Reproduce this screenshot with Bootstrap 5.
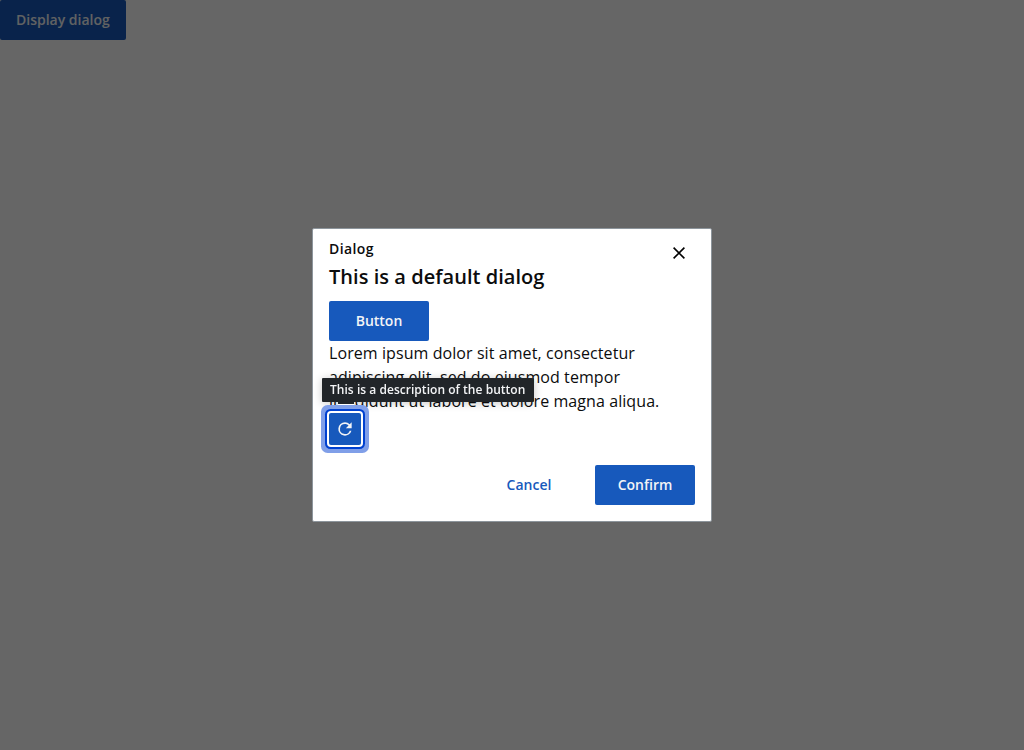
<!DOCTYPE html>
<html lang="en">
<head>
<meta charset="utf-8">
<meta name="viewport" content="width=device-width, initial-scale=1">
<title>Dialog</title>
<link href="https://cdn.jsdelivr.net/npm/bootstrap@5.3.0/dist/css/bootstrap.min.css" rel="stylesheet">
<style>
body { font-family: "Open Sans", sans-serif; font-size: 16px; line-height: 24px; color: #0b0c0d; overflow: hidden; }
.btn { --bs-btn-font-size: 14px; --bs-btn-font-weight: 600; --bs-btn-line-height: 20px; --bs-btn-border-radius: 2px; --bs-btn-padding-y: 10px; --bs-btn-border-width: 0; min-width: 100px; height: 40px; }
.btn-primary { --bs-btn-bg: #1759bc; --bs-btn-border-color: #1759bc; --bs-btn-color: #f3f4f6; }
.btn-link { --bs-btn-color: #1759bc; }
.backdrop { background: rgba(0, 0, 0, .6); }
.dialog-box { width: 400px; height: 294px; padding: 10px 16px 16px; border: 1px solid #8d959c; border-radius: 2px; }
.dialog-label { font-size: 14px; font-weight: 600; line-height: 20px; letter-spacing: .4px; }
.dialog-title { font-size: 20px; font-weight: 600; line-height: 28px; margin: 4px 0 10px; letter-spacing: .04px; }
.dialog-text { letter-spacing: .08px; }
.close-btn { top: 16px; right: 24px; }
.btn-icon { position: relative; z-index: 3; width: 32px; height: 32px; min-width: 0; box-shadow: 0 0 0 2px #fff, 0 0 0 4px #0041d0, 0 0 0 8px #809fe8; }
.tip { left: -7px; top: -35px; z-index: 2; width: 212px; height: 24px; padding: 0 8px; border-radius: 1px; background: #212529; color: #f3f4f6; font-size: 12px; font-weight: 600; line-height: 24px; letter-spacing: .035px; box-shadow: 0 1px 8px rgba(0, 0, 0, .22); }
.tip::after { content: ""; position: absolute; left: 16px; top: 24px; width: 16px; height: 2px; background: #212529; box-shadow: 0 1px #fff; }
</style>
</head>
<body>
<button class="btn btn-primary px-3 d-block">Display dialog</button>
<div class="backdrop position-fixed top-0 start-0 w-100 h-100 d-flex align-items-center justify-content-center">
  <section class="dialog-box bg-white position-relative d-flex flex-column" role="dialog" aria-modal="true" aria-labelledby="title">
    <div class="dialog-label">Dialog</div>
    <h1 class="dialog-title" id="title">This is a default dialog</h1>
    <button class="close-btn position-absolute border-0 bg-transparent p-0 d-flex" aria-label="Close">
      <svg width="16" height="16" viewBox="0 0 16 16"><path d="M2.6 2.6 13.4 13.4M13.4 2.6 2.6 13.4" stroke="#000" stroke-width="1.6" fill="none"/></svg>
    </button>
    <div><button class="btn btn-primary d-block">Button</button></div>
    <p class="dialog-text mb-0">Lorem ipsum dolor sit amet, consectetur adipiscing elit, sed do eiusmod tempor incididunt ut labore et dolore magna aliqua.</p>
    <div class="position-relative align-self-start">
      <button class="btn btn-primary btn-icon p-0 border-0 d-flex align-items-center justify-content-center" aria-describedby="tip">
        <svg width="20" height="20" viewBox="0 0 24 24" fill="currentColor"><path d="M17.65 6.35A7.96 7.96 0 0 0 12 4a8 8 0 1 0 7.73 10h-2.08A6 6 0 1 1 12 6c1.66 0 3.14.69 4.22 1.78L13 11h7V4z"/></svg>
      </button>
      <div class="tip position-absolute text-nowrap" id="tip" role="tooltip">This is a description of the button</div>
    </div>
    <div class="d-flex justify-content-end gap-3 mt-auto">
      <button class="btn btn-link text-decoration-none">Cancel</button>
      <button class="btn btn-primary">Confirm</button>
    </div>
  </section>
</div>
<script src="https://cdn.jsdelivr.net/npm/bootstrap@5.3.0/dist/js/bootstrap.bundle.min.js"></script>
</body>
</html>
